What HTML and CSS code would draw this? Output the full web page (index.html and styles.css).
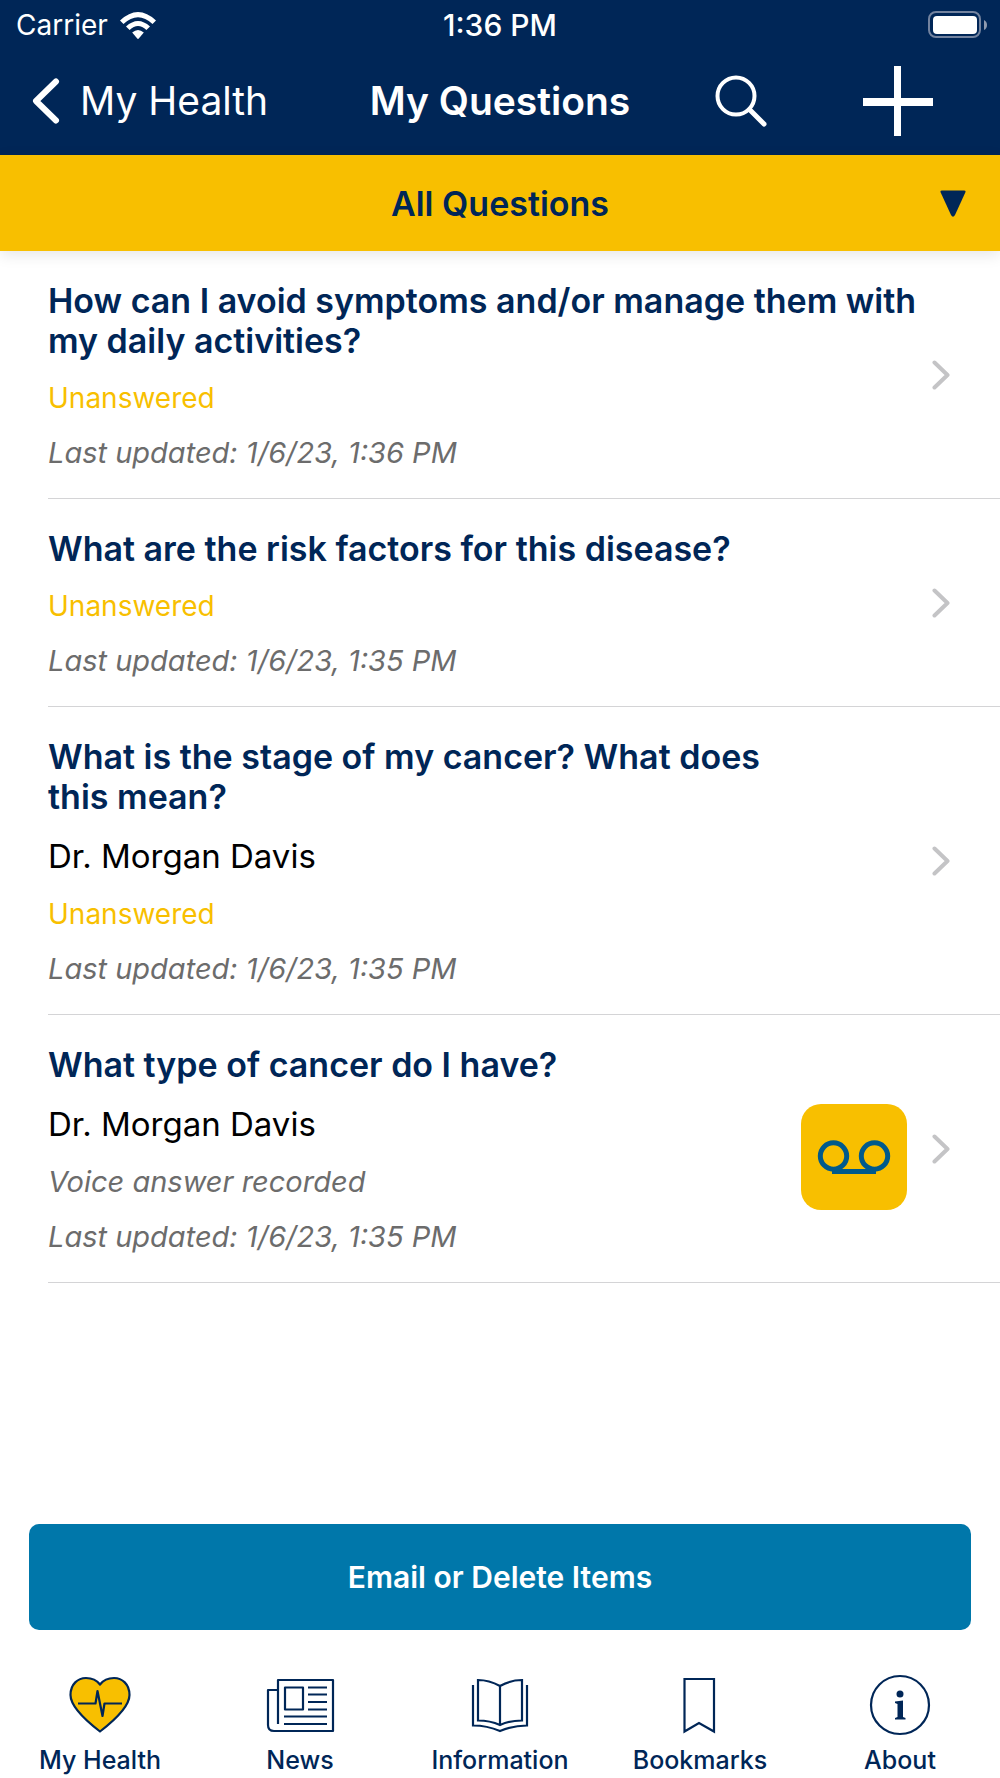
FILE: index.html
```html
<!DOCTYPE html>
<html lang="en">
<head>
<meta charset="utf-8">
<meta name="viewport" content="width=device-width, initial-scale=1">
<title>My Questions</title>
<link rel="stylesheet" href="styles.css">
</head>
<body>
<div class="app">
  <header class="header">
    <div class="status">
      <div class="status-carrier">
        <span>Carrier</span>
        <svg class="wifi" width="36" height="27" viewBox="0 0 36 27" fill="#fff" aria-hidden="true">
          <path d="M0 8.500 Q18-8.500 36 8.500 L32.500 12 Q18-1.500 3.500 12Z"/>
          <path d="M6 14.500 Q18 3.500 30 14.500 L26.400 18 Q18 10 9.600 18Z"/>
          <path d="M12.200 20.500 Q18 15.500 23.800 20.500 L18.800 26.500 Q18 27.300 17.200 26.500Z"/>
        </svg>
      </div>
      <span class="status-time">1:36 PM</span>
      <svg class="battery" width="60" height="28" viewBox="0 0 60 28" aria-hidden="true">
        <rect x="1" y="1" width="51" height="25" rx="7" fill="none" stroke="#73839f" stroke-width="2"/>
        <rect x="5" y="5" width="44" height="18" rx="4" fill="#fff"/>
        <path d="M56 9Q59 10.500 59 14T56 19Z" fill="#8f9bb0"/>
      </svg>
    </div>
    <nav class="navbar">
      <a class="back" href="#">
        <svg width="28" height="46" viewBox="0 0 28 46" fill="none" stroke="#fff" stroke-width="6" stroke-linecap="round" stroke-linejoin="round" aria-hidden="true"><path d="M24 3.500 4 23 24 42.500"/></svg>
        <span>My Health</span>
      </a>
      <h1 class="title">My Questions</h1>
      <div class="actions">
        <button class="icon-button" type="button" aria-label="Search">
          <svg width="52" height="52" viewBox="0 0 52 52" fill="none" stroke="#fff" aria-hidden="true"><circle cx="21" cy="21" r="18.500" stroke-width="4"/><path d="M34.500 34.500 49 49" stroke-width="5" stroke-linecap="round"/></svg>
        </button>
        <button class="icon-button" type="button" aria-label="Add question">
          <svg width="70" height="70" viewBox="0 0 70 70" fill="#fff" aria-hidden="true"><path d="M31 0h7v70h-7zM0 32h70v8H0z"/></svg>
        </button>
      </div>
    </nav>
  </header>

  <div class="filter">
    <select class="filter-select" aria-label="Filter questions">
      <option>All Questions</option>
      <option>Unanswered</option>
      <option>Answered</option>
    </select>
    <svg class="filter-arrow" width="26" height="27" viewBox="0 0 26 27" fill="#002657" aria-hidden="true"><path d="M2 0.500h22q2.200 0 1.300 2L15 25q-2 3.500-4 0L0.700 2.500q-0.900-2 1.300-2z"/></svg>
  </div>

  <main class="main">
    <ul class="list">
      <li><a class="row" href="#">
        <div class="row-text">
          <h2 class="question">How can I avoid symptoms and/or manage them with my daily activities?</h2>
          <p class="pending">Unanswered</p>
          <p class="note">Last updated: 1/6/23, 1:36 PM</p>
        </div>
        <svg class="chevron" viewBox="0 0 18 30" aria-hidden="true"><path d="M2.500 2.500 15.500 15 2.500 27.500"/></svg>
      </a></li>
      <li><a class="row" href="#">
        <div class="row-text">
          <h2 class="question">What are the risk factors for this disease?</h2>
          <p class="pending">Unanswered</p>
          <p class="note">Last updated: 1/6/23, 1:35 PM</p>
        </div>
        <svg class="chevron" viewBox="0 0 18 30" aria-hidden="true"><path d="M2.500 2.500 15.500 15 2.500 27.500"/></svg>
      </a></li>
      <li><a class="row" href="#">
        <div class="row-text">
          <h2 class="question">What is the stage of my cancer? What does this mean?</h2>
          <p class="doctor">Dr. Morgan Davis</p>
          <p class="pending">Unanswered</p>
          <p class="note">Last updated: 1/6/23, 1:35 PM</p>
        </div>
        <span class="badge-slot"></span>
        <svg class="chevron" viewBox="0 0 18 30" aria-hidden="true"><path d="M2.500 2.500 15.500 15 2.500 27.500"/></svg>
      </a></li>
      <li><a class="row" href="#">
        <div class="row-text">
          <h2 class="question">What type of cancer do I have?</h2>
          <p class="doctor">Dr. Morgan Davis</p>
          <p class="note">Voice answer recorded</p>
          <p class="note">Last updated: 1/6/23, 1:35 PM</p>
        </div>
        <span class="badge-slot voice">
          <svg width="74" height="36" viewBox="0 0 74 36" fill="none" stroke="#005a8c" stroke-width="5" aria-hidden="true"><circle cx="16.500" cy="17" r="13.200"/><circle cx="57.500" cy="17" r="13.200"/><path d="M15 32.500h44"/></svg>
        </span>
        <svg class="chevron" viewBox="0 0 18 30" aria-hidden="true"><path d="M2.500 2.500 15.500 15 2.500 27.500"/></svg>
      </a></li>
    </ul>
    <button class="primary" type="button">Email or Delete Items</button>
  </main>

  <nav class="tabs" aria-label="Sections">
    <a class="tab" href="#">
      <svg width="70" height="62" viewBox="0 0 70 62" fill="none" stroke="#002657" stroke-width="2.200" stroke-linejoin="round" aria-hidden="true"><path fill="#f8bf00" d="M35 57.500C24 49 5.500 34 5.500 21 5.500 10 13 4 21 4c6 0 11 2.500 14 6.500C38 6.500 43 4 49 4c8 0 15.500 6 15.500 17C64.500 34 46 49 35 57.500Z"/><path d="M13 29.500H30.500L32.500 17 37.500 42 39.500 29.500H57"/></svg>
      <span>My Health</span>
    </a>
    <a class="tab" href="#">
      <svg width="70" height="62" viewBox="0 0 70 62" fill="none" stroke="#002657" stroke-width="2.200" stroke-linejoin="round" aria-hidden="true"><path d="M13 50V6h55v51H9q-6 0-6-6V16h10"/><path d="M20 13.500h18v22H20zM43 13.500h19M43 20.500h19M43 28h19M43 35.500h19M19 42.500h43M19 50h43"/></svg>
      <span>News</span>
    </a>
    <a class="tab" href="#">
      <svg width="70" height="62" viewBox="0 0 70 62" fill="none" stroke="#002657" stroke-width="2.200" aria-hidden="true"><path d="M35 12Q24 6 13 6V46.500Q25 46.500 35 51Q45 46.500 57 46.500V6Q46 6 35 12V51"/><path d="M8 11V51.500Q22 51.500 35 57Q48 51.500 62 51.500V11"/></svg>
      <span>Information</span>
    </a>
    <a class="tab" href="#">
      <svg width="70" height="62" viewBox="0 0 70 62" fill="none" stroke="#002657" stroke-width="2.200" aria-hidden="true"><path d="M19.500 5h29.500v52.500L34 49 19.500 57.500Z"/></svg>
      <span>Bookmarks</span>
    </a>
    <a class="tab" href="#">
      <svg width="70" height="62" viewBox="0 0 70 62" fill="none" aria-hidden="true"><circle cx="35" cy="31" r="29" stroke="#002657" stroke-width="2.200"/><circle cx="35" cy="20" r="3.500" fill="#002657"/><path fill="#002657" d="M30 27.500 38 26.500V43l2.500 1v1.500H30V44l2.500-1V30L30 29Z"/></svg>
      <span>About</span>
    </a>
  </nav>
</div>
</body>
</html>
```

FILE: styles.css
```css
* { box-sizing: border-box; }

body {
  margin: 0;
  background: #fff;
  color: #002657;
  font-family: Inter, "Noto Sans", sans-serif;
}

h1, h2, p, ul { margin: 0; padding: 0; }
ul { list-style: none; }
a { color: inherit; text-decoration: none; }
svg { display: block; flex: none; }
button, select { font-family: inherit; cursor: pointer; }

.app {
  display: flex;
  flex-direction: column;
  min-height: 100vh;
}

/* Header */
.header { background: #002657; color: #fff; }

.status {
  display: grid;
  grid-template-columns: 1fr auto 1fr;
  align-items: center;
  height: 50px;
  font-size: 28px;
  line-height: 50px;
}
.status-carrier {
  display: flex;
  align-items: center;
  gap: 12px;
  padding-left: 16px;
}
.status-time { font-size: 30px; font-weight: 500; }
.battery { justify-self: end; margin-right: 12px; }

.navbar {
  display: grid;
  grid-template-columns: 1fr auto 1fr;
  align-items: center;
  height: 105px;
  padding-bottom: 4px;
  line-height: 48px;
}
.back {
  display: flex;
  align-items: center;
  gap: 20px;
  padding-left: 32px;
  font-size: 39px;
}
.title { font-size: 39px; font-weight: 600; }
.actions {
  display: flex;
  align-items: center;
  justify-content: flex-end;
  gap: 96px;
  padding-right: 67px;
}
.icon-button { padding: 0; border: 0; background: none; }

/* Filter bar: the arrow shares the select's grid cell */
.filter {
  display: grid;
  align-items: center;
  background: #f8bf00;
  box-shadow: 0 4px 14px rgba(0, 0, 0, 0.1);
}
.filter-select {
  grid-area: 1 / 1;
  width: 100%;
  height: 96px;
  padding: 0;
  border: 0;
  appearance: none;
  background: none;
  color: #002657;
  font-size: 34px;
  font-weight: 600;
  text-align: center;
  text-align-last: center;
}
.filter-arrow {
  grid-area: 1 / 1;
  justify-self: end;
  margin-right: 34px;
  pointer-events: none;
}

/* Question list */
.main { display: flex; flex: 1; flex-direction: column; }

.row {
  display: flex;
  align-items: center;
  gap: 14px;
  margin-left: 48px;
  padding: 30px 50px 27px 0;
  border-bottom: 1px solid #d4d4d6;
}
.row-text {
  display: flex;
  flex: 1;
  flex-direction: column;
  gap: 19px;
  min-width: 0;
}
.question { font-size: 34px; font-weight: 600; line-height: 40px; }
.doctor { color: #000; font-size: 33px; line-height: 41px; }
.pending, .note { line-height: 36px; }
.pending { color: #f8bf00; font-size: 28px; }
.note { color: #6c6c6c; font-size: 29px; font-style: italic; }

.badge-slot { flex: none; width: 106px; margin-right: 11px; }
.voice {
  display: flex;
  align-items: center;
  justify-content: center;
  height: 106px;
  margin-top: 14px;
  border-radius: 20px;
  background: #f8bf00;
}
.chevron {
  width: 18px;
  height: 30px;
  margin-bottom: 2px;
  fill: none;
  stroke: #c4c4c6;
  stroke-width: 4;
  stroke-linecap: round;
  stroke-linejoin: round;
}

.primary {
  height: 106px;
  margin: auto 29px 0;
  border: 0;
  border-radius: 10px;
  background: #0077aa;
  color: #fff;
  font-size: 30px;
  font-weight: 600;
}

/* Tab bar */
.tabs {
  display: grid;
  grid-template-columns: repeat(5, 1fr);
  padding: 44px 0 4px;
}
.tab {
  display: flex;
  flex-direction: column;
  align-items: center;
  gap: 10px;
  font-size: 25px;
  font-weight: 500;
  line-height: 28px;
}
```
